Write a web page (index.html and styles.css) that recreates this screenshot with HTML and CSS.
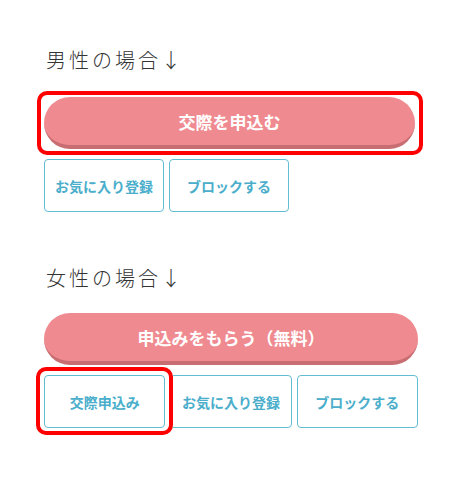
FILE: index.html
```html
<!DOCTYPE html>
<html lang="ja">
<head>
  <meta charset="UTF-8" />
  <meta name="viewport" content="width=device-width, initial-scale=1.0" />
  <title>交際申込み</title>
  <link rel="stylesheet" href="styles.css">
</head>
<body>
  <div class="container">

    <div class="section">
      <h2 class="heading">男性の場合↓</h2>
      <div class="main-btn marked">
        交際を申込む
        <span class="mark mark-wide"></span>
      </div>
      <div class="sub-row">
        <div class="sub-btn fixed">お気に入り登録</div>
        <div class="sub-btn fixed">ブロックする</div>
      </div>
    </div>

    <div class="section">
      <h2 class="heading">女性の場合↓</h2>
      <div class="main-btn">申込みをもらう（無料）</div>
      <div class="sub-row">
        <div class="sub-btn marked">
          交際申込み
          <span class="mark mark-small"></span>
        </div>
        <div class="sub-btn">お気に入り登録</div>
        <div class="sub-btn">ブロックする</div>
      </div>
    </div>

  </div>
</body>
</html>
```

FILE: styles.css
```css
body {
  margin: 0;
  background-color: #fff;
  font-family: "Noto Sans CJK JP", "Noto Sans", sans-serif;
}

.container {
  width: 374px;
  padding: 45px 0 0 44px;
}

.section {
  margin-bottom: 51px;
}

.heading {
  margin: 0 0 22px 2px;
  font-size: 20px;
  line-height: 30px;
  font-weight: 300;
  letter-spacing: 3px;
  color: #333;
}

.section + .section .heading {
  margin-bottom: 20px;
}

.main-btn {
  height: 47px;
  display: flex;
  align-items: center;
  justify-content: center;
  background-color: #ef8b90;
  border-bottom: 4px solid #c86e72;
  border-radius: 26px;
  color: #fff;
  font-size: 17px;
  font-weight: bold;
  padding-top: 1px;
}

.section:first-child .main-btn {
  margin-right: 3px;
}

.sub-row {
  display: flex;
  gap: 5px;
  margin-top: 10px;
}

.sub-btn {
  flex: 1;
  height: 51px;
  display: flex;
  align-items: center;
  justify-content: center;
  border: 1px solid #62bcd2;
  border-radius: 4px;
  background-color: #fff;
  color: #4aaecb;
  font-size: 14px;
  font-weight: bold;
}

.sub-btn.fixed {
  flex: none;
  width: 118px;
}

.marked {
  position: relative;
}

.mark {
  position: absolute;
  border: 4px solid #f00;
  border-radius: 10px;
  pointer-events: none;
}

.mark-wide {
  top: -6px;
  bottom: -10px;
  left: -7px;
  right: -8px;
}

.mark-small {
  top: -9px;
  bottom: -8px;
  left: -9px;
  right: -9px;
}
```
